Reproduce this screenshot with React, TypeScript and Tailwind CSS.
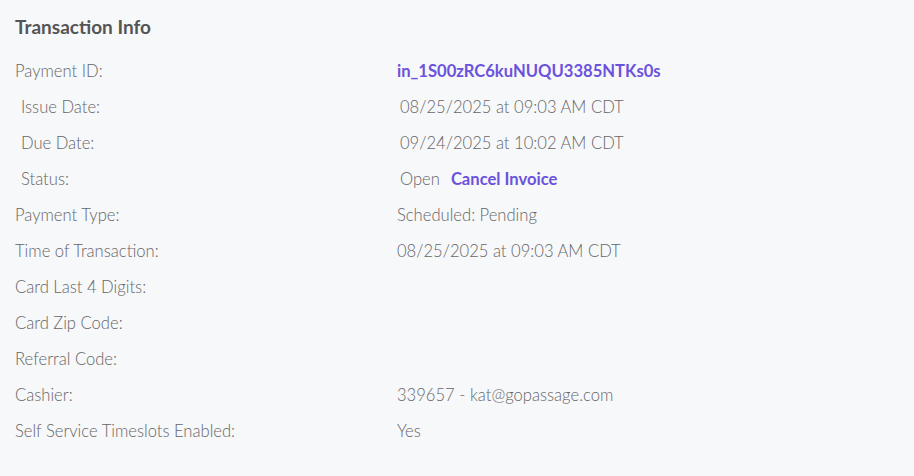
import React from "react";

type Row = {
  label: string;
  value?: React.ReactNode;
  indent?: boolean;
};

const rows: Row[] = [
  {
    label: "Payment ID:",
    value: (
      <a href="#" className="font-bold text-[#6b52dc]">
        in_1S00zRC6kuNUQU3385NTKs0s
      </a>
    ),
  },
  { label: "Issue Date:", value: "08/25/2025 at 09:03 AM CDT", indent: true },
  { label: "Due Date:", value: "09/24/2025 at 10:02 AM CDT", indent: true },
  {
    label: "Status:",
    value: (
      <>
        Open
        <a href="#" className="ml-[11px] font-bold text-[#6b52dc]">
          Cancel Invoice
        </a>
      </>
    ),
    indent: true,
  },
  { label: "Payment Type:", value: "Scheduled: Pending" },
  { label: "Time of Transaction:", value: "08/25/2025 at 09:03 AM CDT" },
  { label: "Card Last 4 Digits:" },
  { label: "Card Zip Code:" },
  { label: "Referral Code:" },
  { label: "Cashier:", value: "339657 - kat@gopassage.com" },
  { label: "Self Service Timeslots Enabled:", value: "Yes" },
];

export default function App() {
  return (
    <div
      className="min-h-screen w-full bg-[#f7f8fa] px-[15px] pt-[15px] text-[16.6px] font-light text-[#666]"
      style={{ fontFamily: "Lato, 'Open Sans', sans-serif" }}
    >
      <h2 className="h-[24px] text-[19px] leading-[24px] font-bold text-[#555]">
        Transaction Info
      </h2>
      <div className="mt-[14px] flex flex-col">
        {rows.map((row) => (
          <div key={row.label} className="flex h-[36px] items-center">
            <div className={`w-[382px] shrink-0 ${row.indent ? "pl-[6px]" : ""}`}>
              {row.label}
            </div>
            <div className={row.indent ? "pl-[3px]" : ""}>{row.value}</div>
          </div>
        ))}
      </div>
    </div>
  );
}
